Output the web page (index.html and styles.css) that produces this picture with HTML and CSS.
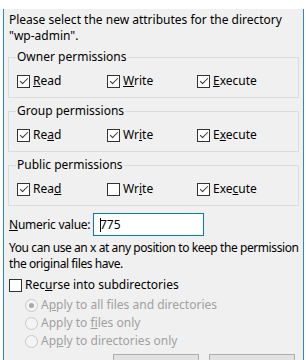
FILE: index.html
```html
<!DOCTYPE html>
<html lang="en">
<head>
    <meta charset="UTF-8">
    <title>Change file attributes</title>
    <link rel="stylesheet" href="styles.css">
</head>
<body>

<div class="dialog">
    <p class="intro">Please select the new attributes for the directory<br>"wp-admin".</p>

    <fieldset class="group">
        <legend>Owner permissions</legend>
        <div class="perm-row">
            <label class="check"><span class="box checked"></span><span><u>R</u>ead</span></label>
            <label class="check"><span class="box checked"></span><span><u>W</u>rite</span></label>
            <label class="check"><span class="box checked"></span><span><u>E</u>xecute</span></label>
        </div>
    </fieldset>

    <fieldset class="group">
        <legend>Group permissions</legend>
        <div class="perm-row">
            <label class="check"><span class="box checked"></span><span>Re<u>a</u>d</span></label>
            <label class="check"><span class="box checked"></span><span>Wr<u>i</u>te</span></label>
            <label class="check"><span class="box checked"></span><span>E<u>x</u>ecute</span></label>
        </div>
    </fieldset>

    <fieldset class="group">
        <legend>Public permissions</legend>
        <div class="perm-row">
            <label class="check"><span class="box checked"></span><span>Rea<u>d</u></span></label>
            <label class="check"><span class="box"></span><span>Wr<u>i</u>te</span></label>
            <label class="check"><span class="box checked"></span><span>Exe<u>c</u>ute</span></label>
        </div>
    </fieldset>

    <div class="numeric">
        <label><u>N</u>umeric value:</label>
        <div class="textbox"><span class="caret"></span>775</div>
    </div>

    <p class="hint">You can use an x at any position to keep the permission<br>the original files have.</p>

    <label class="check recurse"><span class="box"></span><span>Rec<u>u</u>rse into subdirectories</span></label>

    <div class="radios">
        <label class="radio"><span class="dot selected"></span><span>A<u>p</u>ply to all files and directories</span></label>
        <label class="radio"><span class="dot"></span><span>Apply to <u>f</u>iles only</span></label>
        <label class="radio"><span class="dot"></span><span>Ap<u>p</u>ly to directories only</span></label>
    </div>

    <div class="buttons">
        <button>OK</button>
        <button>Cancel</button>
    </div>
</div>

</body>
</html>
```

FILE: styles.css
```css
body {
    margin: 0;
    background-color: white;
    font-family: 'Noto Sans', 'Open Sans', sans-serif;
    font-size: 12px;
    line-height: 16px;
    color: #000;
    overflow: hidden;
}
.dialog {
    margin: 9px 0 0 3px;
    height: 400px;
    width: 291px;
    border-left: 1px solid #2b88d8;
    border-right: 1px solid #2b88d8;
    background-color: #f0f0f0;
    padding: 3px 4px 0 4px;
}
.intro {
    margin: 0 0 5px 1px;
}

/* Group boxes */
.group {
    margin: 0;
    padding: 8px 8px 8px 8px;
    border: 1px solid #dcdcdc;
    min-width: 0;
}
.group + .group {
    margin-top: 5px;
}
legend {
    padding: 0 1px;
    margin-left: -1px;
}
.perm-row {
    display: grid;
    grid-template-columns: 90px 90px 1fr;
}

/* Checkboxes */
.check {
    display: flex;
    align-items: center;
    height: 16px;
    white-space: nowrap;
}
.box {
    width: 11px;
    height: 11px;
    border: 1px solid #333;
    background-color: white;
    margin-right: 3px;
    position: relative;
    flex: none;
}
.box.checked::after {
    content: "";
    position: absolute;
    left: 2px;
    top: 2px;
    width: 7px;
    height: 3px;
    border-left: 1px solid #333;
    border-bottom: 1px solid #333;
    transform: rotate(-45deg);
}

/* Numeric value */
.numeric {
    display: flex;
    align-items: center;
    margin: 7px 0 0 1px;
}
.numeric label {
    width: 84px;
    flex: none;
    white-space: nowrap;
    letter-spacing: -0.25px;
}
.textbox {
    width: 103px;
    height: 21px;
    border: 1px solid #0078d7;
    background-color: white;
    display: flex;
    align-items: center;
    padding-left: 6px;
}
.caret {
    width: 1px;
    height: 14px;
    background-color: #000;
    margin-right: -1px;
}
.hint {
    margin: 4px 0 5px 1px;
    white-space: nowrap;
    letter-spacing: -0.42px;
}

/* Recurse + radios */
.recurse {
    margin-left: 1px;
}
.radios {
    margin: 4px 0 0 17px;
    color: #a0a0a0;
    display: flex;
    flex-direction: column;
    gap: 2px;
}
.radio {
    display: flex;
    align-items: center;
    height: 16px;
    white-space: nowrap;
}
.dot {
    width: 11px;
    height: 11px;
    border: 1px solid #c8c8c8;
    border-radius: 50%;
    background-color: #f4f4f4;
    margin-right: 3px;
    position: relative;
    flex: none;
}
.dot.selected::after {
    content: "";
    position: absolute;
    left: 3px;
    top: 3px;
    width: 5px;
    height: 5px;
    border-radius: 50%;
    background-color: #a8a8a8;
}

/* Buttons */
.buttons {
    display: flex;
    justify-content: flex-end;
    gap: 10px;
    margin: 5px 4px 0 0;
}
button {
    width: 86px;
    height: 23px;
    background-color: #e1e1e1;
    border: 1px solid #adadad;
    font-family: inherit;
    font-size: 12px;
    padding: 0;
}
```
